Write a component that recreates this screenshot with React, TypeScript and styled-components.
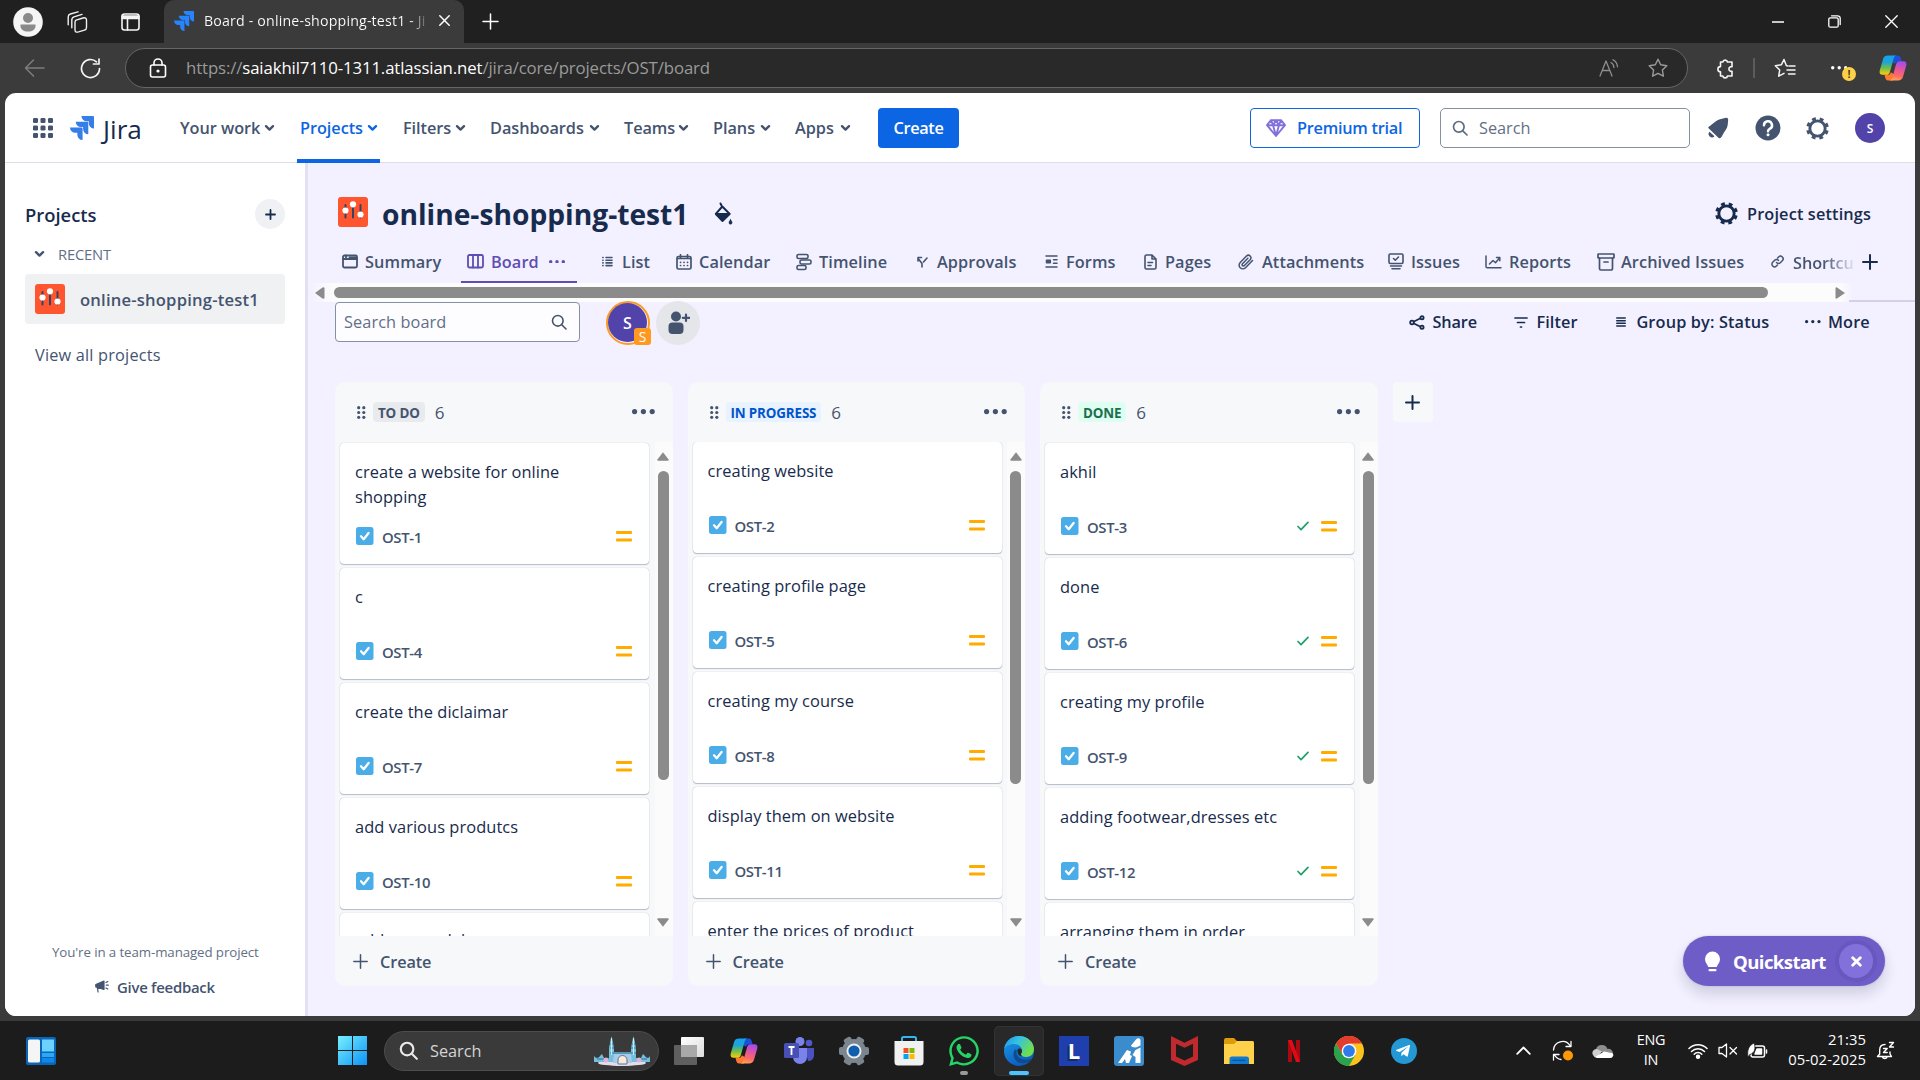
import React from 'react';
import styled, { createGlobalStyle } from 'styled-components';
import { FaWhatsapp, FaTelegramPlane } from 'react-icons/fa';

const Global = createGlobalStyle`
  *{box-sizing:border-box}
  html,body{margin:0;padding:0;background:#3b3b3b;overflow:hidden}
  body{font-family:"Open Sans","Noto Sans","Liberation Sans",sans-serif;color:#172b4d}
  svg{display:block;flex:none}
`;

/* ---------- shared parts ---------- */
const Screen = styled.div`width:1920px;height:1080px;display:flex;flex-direction:column;background:#3b3b3b;overflow:hidden;`;
const Gap = styled.div<{ $w: number }>`width:${p => p.$w}px;flex:none;`;
const Spacer = styled.div`flex:1;`;
const Label = styled.span<{ $w?: number; $s?: number; $wt?: number; $c?: string; $ls?: number }>`
  display:block;flex:none;white-space:nowrap;line-height:1.3;padding-top:2px;
  width:${p => (p.$w ? p.$w + 'px' : 'auto')};
  font-size:${p => p.$s ?? 16.3}px;font-weight:${p => p.$wt ?? 400};
  color:${p => p.$c ?? '#172b4d'};letter-spacing:${p => p.$ls ?? 0}px;
`;

type IconProps = { w: number; h?: number; vb?: string; c?: string; sw?: number; fill?: string; children: React.ReactNode };
const Icon = ({ w, h, vb, c = 'currentColor', sw = 1.5, fill = 'none', children }: IconProps) => (
  <svg width={w} height={h ?? w} viewBox={vb ?? `0 0 ${w} ${h ?? w}`} fill={fill} stroke={c} strokeWidth={sw} strokeLinecap="round" strokeLinejoin="round">{children}</svg>
);

const JiraMark = ({ size, color }: { size: number; color: string }) => (
  <svg width={size} height={size} viewBox="0 0 24 24" fill={color}>
    <path d="M11.571 11.513H0a5.218 5.218 0 0 0 5.232 5.215h2.13v2.057A5.215 5.215 0 0 0 12.575 24V12.518a1.005 1.005 0 0 0-1.005-1.005z" />
    <path d="M17.294 5.757H5.736a5.215 5.215 0 0 0 5.215 5.214h2.129v2.058a5.218 5.218 0 0 0 5.215 5.214V6.758a1.001 1.001 0 0 0-1.001-1.001z" />
    <path d="M23.013 0H11.455a5.215 5.215 0 0 0 5.215 5.215h2.129v2.057A5.215 5.215 0 0 0 24 12.483V1.005A1.001 1.001 0 0 0 23.013 0Z" />
  </svg>
);
const Copilot = ({ size, id }: { size: number; id: string }) => (
  <svg width={size} height={size} viewBox="0 0 28 28">
    <defs>
      <linearGradient id={id + 'a'} x1="0" y1="0" x2="0" y2="1"><stop offset="0" stopColor="#12a4f2" /><stop offset=".35" stopColor="#1fa3d4" /><stop offset=".65" stopColor="#6fbf4b" /><stop offset="1" stopColor="#ffcd0f" /></linearGradient>
      <linearGradient id={id + 'b'} x1=".6" y1="0" x2=".4" y2="1"><stop offset="0" stopColor="#a04bf0" /><stop offset=".4" stopColor="#e0559f" /><stop offset=".75" stopColor="#fc6a63" /><stop offset="1" stopColor="#ffa15a" /></linearGradient>
    </defs>
    <path d="M14 1.500h5c1.600 0 2.300 1.300 2.800 3l.8 2.700h-3.500c-1.700 0-2.500 1-3 2.600L13 8z" fill="#1b50d8" />
    <path d="M14 26.500H9c-1.600 0-2.300-1.300-2.800-3l-.8-2.700h3.500c1.700 0 2.500-1 3-2.600l3 2z" fill="#ff7a2e" />
    <path d="M9 1.500h8.500c-1.700.2-2.500 1.600-3 3.400l-3.500 12.500c-.6 2.200-1.400 3.400-3.500 3.400H3.600C.9 20.800.1 18.800.8 16.200L4 5.200c.8-2.600 2.400-3.700 5-3.700z" fill={`url(#${id}a)`} />
    <path d="M19 26.500h-8.500c1.700-.2 2.500-1.600 3-3.400L17 10.600c.6-2.200 1.400-3.400 3.500-3.400h3.900c2.700 0 3.500 2 2.800 4.600l-3.200 11c-.8 2.600-2.400 3.700-5 3.700z" fill={`url(#${id}b)`} />
  </svg>
);
const ProjectIcon = () => (
  <svg width="30" height="30" viewBox="0 0 30 30">
    <rect width="30" height="30" rx="3" fill="#ff5630" />
    <g stroke="#344563" strokeWidth="2" strokeLinecap="round"><path d="M7.500 8v12.500M15 6v14.500M22.500 8v12.500" /></g>
    <g fill="#fff"><circle cx="7.500" cy="13.500" r="3.100" /><circle cx="15" cy="7.300" r="3.100" /><circle cx="22.500" cy="17.500" r="3.100" /></g>
  </svg>
);
const Chevron = ({ c }: { c: string }) => <Icon w={11} h={8} c={c} sw={2.4}><path d="M2 2.200l3.500 3.400L9 2.200" /></Icon>;
const Magnifier = ({ s, c, sw = 1.7 }: { s: number; c: string; sw?: number }) => <Icon w={s} vb="0 0 16 16" c={c} sw={sw}><circle cx="6.800" cy="6.800" r="5.300" /><path d="M10.800 10.800l4.200 4.200" /></Icon>;
const Gear = ({ s, c }: { s: number; c: string }) => (
  <svg width={s} height={s} viewBox="0 0 24 24" fill="none" stroke={c}>
    <circle cx="12" cy="12" r="8" strokeWidth="3" />
    <circle cx="12" cy="12" r="10.200" strokeWidth="3.200" strokeDasharray="4 4.010" strokeDashoffset="-2" />
  </svg>
);
const Dots = ({ c, r = 2.5, step = 9 }: { c: string; r?: number; step?: number }) => (
  <svg width={step * 2 + r * 2} height={r * 2} fill={c}><circle cx={r} cy={r} r={r} /><circle cx={r + step} cy={r} r={r} /><circle cx={r + step * 2} cy={r} r={r} /></svg>
);

/* ---------- browser chrome ---------- */
const TabStrip = styled.div`height:43px;flex:none;background:#202020;display:flex;align-items:center;padding-left:13px;color:#fff;`;
const Tab = styled.div`
  width:300px;height:43px;background:#3b3b3b;border-radius:10px 10px 0 0;display:flex;align-items:center;padding:0 13px 2px 10px;color:#fff;
`;
const TabTitle = styled.div`
  width:225px;overflow:hidden;margin-left:10px;
  span{background:linear-gradient(90deg,#fff 195px,#fff 205px,#3b3b3b 226px);background-clip:text;-webkit-background-clip:text;color:transparent;}
`;
const WindowButtons = styled.div`margin-left:auto;display:flex;align-items:center;gap:44px;padding-right:22px;`;
const Toolbar = styled.div`height:50px;flex:none;display:flex;align-items:center;padding-left:24px;color:#fff;`;
const AddressBar = styled.div`width:1563px;height:40px;border-radius:20px;border:1px solid #666;background:#292929;display:flex;align-items:center;padding:0 17px 0 23px;`;
const UrlText = styled.div`font-size:16.8px;color:#9a9a9a;white-space:nowrap;margin-left:19px;letter-spacing:-.12px;padding-bottom:1px;b{font-weight:400;color:#fff}`;
const ToolDivider = styled.div`width:2px;height:20px;background:#5c5c5c;`;
const MoreBadge = styled.div`width:26px;height:24px;position:relative;display:flex;align-items:center;`;
const Warn = styled.span`position:absolute;left:11px;top:11px;width:14px;height:14px;border-radius:50%;background:#ffcf45;color:#222;font-size:11px;font-weight:600;line-height:14px;text-align:center;`;

const BrowserTop = () => (
  <>
    <TabStrip>
      <svg width="30" height="30" viewBox="0 0 30 30"><circle cx="15" cy="15" r="14.800" fill="#f5f5f5" /><circle cx="15" cy="11" r="5" fill="#8a8a8a" /><path d="M7.500 17.500h15v1.500c0 3.500-3 5.500-7.500 5.500S7.500 22.500 7.500 19z" fill="#8a8a8a" /></svg>
      <Gap $w={23} />
      <Icon w={22} c="#f0f0f0" sw={1.400}><path d="M10 9.200l7-2.200q3.500-.9 3.500 2v7.500q0 2-2 2.600l-6 1.800q-3.500.9-3.500-2.200v-7.200q0-1.800 1-2.300z" /><path d="M5.800 16.800V9q0-2.500 2.200-3.200l8-2.400M2.200 13.800V6q0-2.300 2.200-3l7.600-2.200" /></Icon>
      <Gap $w={33} />
      <Icon w={19} h={18} c="#f5f5f5" sw={1.600}><rect x="1" y="1" width="17" height="16" rx="2.500" /><path d="M1.500 3.500h16M1.500 5h16" strokeWidth="2.400" /><path d="M6.500 5v12" /></Icon>
      <Gap $w={24} />
      <Tab>
        <JiraMark size={20} color="#2684ff" />
        <TabTitle><Label $s={14.2} $ls={0.17}>Board - online-shopping-test1 - Ji</Label></TabTitle>
        <Gap $w={10} />
        <Icon w={11} c="#fff" sw={1.500}><path d="M.8.8l9.400 9.400M10.200.8L.8 10.200" /></Icon>
      </Tab>
      <Gap $w={18} />
      <Icon w={17} c="#fff" sw={1.500}><path d="M8.500 1v15M1 8.500h15" /></Icon>
      <WindowButtons>
        <Icon w={12} c="#fff" sw={1.300}><path d="M0 6h12" /></Icon>
        <Icon w={13} h={13} c="#fff" sw={1.300}><rect x=".8" y="2.800" width="9.400" height="9.400" rx="1.500" /><path d="M3.500.8h6.200a2.500 2.500 0 0 1 2.500 2.500v6.200" /></Icon>
        <Icon w={13} c="#fff" sw={1.300}><path d="M.8.8l11.400 11.400M12.200.8L.8 12.200" /></Icon>
      </WindowButtons>
    </TabStrip>
    <Toolbar>
      <Icon w={21} h={18} c="#7e7e7e" sw={1.500}><path d="M20 9H1.500M9.500 1L1.500 9l8 8" /></Icon>
      <Gap $w={35} />
      <Icon w={21} c="#f5f5f5" sw={1.700}><path d="M19.500 10.500a9 9 0 1 1-3-6.700M19 1v5h-5.500" /></Icon>
      <Gap $w={24} />
      <AddressBar>
        <Icon w={18} h={20} c="#fff" sw={1.600}><rect x="1.500" y="7" width="15" height="12" rx="2" /><path d="M5 7V5a4 4 0 0 1 8 0v2" /><circle cx="9" cy="13" r=".8" fill="#fff" /></Icon>
        <UrlText>https://<b>saiakhil7110-1311.atlassian.net</b>/jira/core/projects/OST/board</UrlText>
        <Gap $w={889} />
        <Icon w={20} h={18} c="#8e8e8e" sw={1.300}><path d="M1 17L7 2l6 15M3.200 11.500h7.600M12 3.500c2 1 2.800 2.800 2.900 5M14 .8c3 1.500 4.300 4 4.500 7" /></Icon>
        <Gap $w={29} />
        <Icon w={20} c="#9a9a9a" sw={1.400} vb="0 0 20 20"><path d="M10 1.200l2.700 5.600 6.100.9-4.400 4.300 1 6.200L10 15.300l-5.400 2.900 1-6.200L1.200 7.700l6.100-.9z" /></Icon>
      </AddressBar>
      <Gap $w={27} />
      <Icon w={20} h={21} vb="0 0 20 21" c="#f5f5f5" sw={1.600}><path d="M5.500 4h2.300a2.400 2.400 0 0 1 4.700 0H17v4.700a2.400 2.400 0 1 0 0 4.600V18h-4.500a2.400 2.400 0 0 1-4.700 0H5.500v-4.200a2.600 2.600 0 1 1 0-5.200z" /></Icon>
      <Gap $w={18} />
      <ToolDivider />
      <Gap $w={19} />
      <Icon w={22} h={20} vb="0 0 22 20" c="#f5f5f5" sw={1.500}><path d="M13.500 8l-1.200-.5L10 1.500 7.300 6.800l-6 .9 4.400 4.300-1 6.200 5.300-2.800M15 8h6M13 12h8M14.500 16H21" /></Icon>
      <Gap $w={35} />
      <MoreBadge><Dots c="#fff" r={1.700} step={6.500} /><Warn>!</Warn></MoreBadge>
      <Gap $w={22} />
      <Copilot size={28} id="cpTop" />
    </Toolbar>
  </>
);

/* ---------- jira shell ---------- */
const Page = styled.div`
  position:relative;width:1910px;height:923px;flex:none;margin-left:5px;background:#fff;border-radius:11px;overflow:hidden;display:flex;flex-direction:column;
`;
const Header = styled.header`height:70px;flex:none;border-bottom:1px solid #dcdfe8;display:flex;align-items:center;padding:1px 0 0 28px;`;
const NavItem = styled.div<{ $adv: number; $on?: boolean }>`
  width:${p => p.$adv}px;height:68px;flex:none;display:flex;align-items:center;position:relative;
  ${p => p.$on && `&::after{content:"";position:absolute;left:-3px;bottom:-1px;width:83px;height:4px;background:#0c66e4;}`}
`;
const CreateBtn = styled.button`width:81px;height:40px;border:0;border-radius:4px;background:#0c66e4;display:flex;align-items:center;justify-content:center;padding:0;font-family:inherit;`;
const Premium = styled.button`width:170px;height:40px;border:1.500px solid #0c66e4;border-radius:4px;background:#fff;display:flex;align-items:center;padding:0 0 0 15px;gap:11px;font-family:inherit;`;
const SearchBox = styled.div`width:250px;height:40px;border:1px solid #8590a2;border-radius:5px;display:flex;align-items:center;padding-left:11px;gap:11px;`;
const Avatar = styled.div<{ $d: number }>`width:${p => p.$d}px;height:${p => p.$d}px;border-radius:50%;background:#5243aa;color:#fff;font-size:${p => (p.$d > 35 ? 16 : 12)}px;font-weight:600;display:flex;align-items:center;justify-content:center;`;
const Body = styled.div`flex:1;display:flex;min-height:0;`;

const NAV = [
  { t: 'Your work', w: 80, adv: 120 }, { t: 'Projects', w: 63, adv: 103, on: true }, { t: 'Filters', w: 48, adv: 87 },
  { t: 'Dashboards', w: 95, adv: 134 }, { t: 'Teams', w: 50, adv: 89 }, { t: 'Plans', w: 43, adv: 82 }, { t: 'Apps', w: 41, adv: 83 },
];

const JiraHeader = () => (
  <Header>
    <svg width="20" height="20" fill="#44546f">{[0, 7.500, 15].map(y => [0, 7.500, 15].map(x => <rect key={x + '-' + y} x={x} y={y} width="5" height="5" rx="1.200" />))}</svg>
    <Gap $w={17} />
    <JiraMark size={24} color="#357de8" />
    <Gap $w={9} />
    <Label $w={77} $s={26.2} $ls={0}>Jira</Label>
    {NAV.map(n => (
      <NavItem key={n.t} $adv={n.adv} $on={n.on}>
        <Label $w={n.w} $wt={550} $s={16.3} $ls={-0.05} $c={n.on ? '#0c66e4' : '#44546f'}>{n.t}</Label>
        <Gap $w={4} />
        <Chevron c={n.on ? '#0c66e4' : '#44546f'} />
      </NavItem>
    ))}
    <CreateBtn><Label $wt={600} $c="#fff" $ls={-0.3}>Create</Label></CreateBtn>
    <Gap $w={291} />
    <Premium>
      <Icon w={20} h={18} c="#8270db" sw={1.900}><path d="M5 1.200h10l4 5L10 17 1 6.200zM1.500 6.200h17M7 6.200l3 10.500 3-10.500M5 1.200l2 5 3-5 3 5 2-5" /></Icon>
      <Label $wt={600} $c="#0c66e4" $ls={-0.25}>Premium trial</Label>
    </Premium>
    <Gap $w={20} />
    <SearchBox><Magnifier s={16} c="#5d6b83" /><Label $c="#626f86" $s={16.300}>Search</Label></SearchBox>
    <Gap $w={17} />
    <Icon w={22} c="none" fill="#44546f"><path d="M1.300 11C1 9.800 3 9 5 7.300 8 4.500 11 2.500 15 1.700l4-.9q2.200-.2 2.200 1.800L20.700 8c-.5 4-3.200 6-5 9.800-1.200 2.700-2.300 4-4 3.200z" /><path d="M2.500 14.800l5 4.500a3.300 3.300 0 0 1-5-4.500z" /></Icon>
    <Gap $w={26} />
    <svg width="26" height="26" viewBox="0 0 26 26"><circle cx="13" cy="13" r="12.500" fill="#44546f" /><path d="M9 10.300a4 4 0 1 1 6 3.400c-1.400.8-2 1.300-2 2.600" fill="none" stroke="#fff" strokeWidth="2.500" strokeLinecap="round" /><circle cx="13" cy="19.800" r="1.500" fill="#fff" /></svg>
    <Gap $w={25} />
    <Gear s={23} c="#44546f" />
    <Gap $w={26} />
    <Avatar $d={30}>S</Avatar>
  </Header>
);

/* ---------- sidebar ---------- */
const Sidebar = styled.aside`width:303px;flex:none;border-right:3px solid #e3e0f3;background:#fff;display:flex;flex-direction:column;padding:36px 18px 0 20px;`;
const SideTop = styled.div`height:30px;display:flex;align-items:center;justify-content:space-between;width:260px;`;
const RoundBtn = styled.div`width:30px;height:30px;border-radius:50%;background:#f0f1f4;display:flex;align-items:center;justify-content:center;`;
const Recent = styled.div`height:50px;display:flex;align-items:center;padding-left:9px;`;
const Selected = styled.div`width:260px;height:50px;border-radius:4px;background:#f0f1f3;display:flex;align-items:center;padding-left:10px;margin-top:-5px;`;
const ViewAll = styled.div`padding:19px 0 0 10px;`;
const SideFoot = styled.div`margin-top:auto;height:78px;display:flex;flex-direction:column;`;
const FootLine = styled.div<{ $pl: number; $h: number }>`height:${p => p.$h}px;display:flex;align-items:center;padding-left:${p => p.$pl}px;`;

const SidebarPanel = () => (
  <Sidebar>
    <SideTop>
      <Label $s={18.4} $wt={550} $ls={0}>Projects</Label>
      <RoundBtn><Icon w={11} c="#172b4d" sw={1.800}><path d="M5.500 1v9M1 5.500h9" /></Icon></RoundBtn>
    </SideTop>
    <Recent><Chevron c="#44546f" /><Gap $w={13} /><Label $s={14.8} $c="#626f86" $ls={-0.2}>RECENT</Label></Recent>
    <Selected><ProjectIcon /><Gap $w={15} /><Label $wt={550} $c="#44546f" $s={16.6} $ls={0.2}>online-shopping-test1</Label></Selected>
    <ViewAll><Label $c="#44546f" $s={16.3} $ls={0.2}>View all projects</Label></ViewAll>
    <SideFoot>
      <FootLine $pl={27} $h={27}><Label $s={13.3} $c="#626f86" $ls={-0.1}>You're in a team-managed project</Label></FootLine>
      <FootLine $pl={70} $h={43}>
        <Icon w={14} h={13} c="#44546f" sw={1.200}><path d="M.8 4.500L9 1v8.500L.8 7zM2.300 7.500l.8 4.500" fill="#44546f" /><path d="M11 2.500l1.800-1M11.300 5.200h2M11 8l1.800 1" /></Icon>
        <Gap $w={8} /><Label $s={14.9} $wt={550} $c="#44546f" $ls={-0.25}>Give feedback</Label>
      </FootLine>
    </SideFoot>
  </Sidebar>
);

/* ---------- project header ---------- */
const Main = styled.main`width:1607px;flex:none;background:#f3f0ff;display:flex;flex-direction:column;`;
const TitleRow = styled.div`height:77px;flex:none;display:flex;align-items:center;padding:24px 45px 0 30px;& > svg:first-child{margin-top:-3px}`;
const TabsRow = styled.div`height:43px;flex:none;display:flex;align-items:center;padding-left:29px;`;
const ViewTab = styled.div<{ $adv: number; $on?: boolean }>`
  width:${p => p.$adv}px;height:43px;flex:none;display:flex;align-items:center;color:${p => (p.$on ? '#5e4db2' : '#44546f')};position:relative;
  ${p => p.$on && `&::after{content:"";position:absolute;left:-6px;bottom:0;width:116px;height:2px;background:#5e4db2;}`}
`;
const IconSlot = styled.div<{ $w: number }>`width:${p => p.$w}px;flex:none;`;
const FadeLabel = styled.div`
  width:60px;overflow:hidden;white-space:nowrap;font-size:16.3px;font-weight:550;letter-spacing:-.05px;padding-top:2px;
  background:linear-gradient(90deg,#44546f 30px,#f3f0ff 64px);background-clip:text;-webkit-background-clip:text;color:transparent;
`;
const HScroll = styled.div`height:19px;flex:none;display:flex;align-items:center;background:linear-gradient(90deg,#f3f0ff 0,#fcfcfc 26px,#fcfcfc 1532px,#f3f0ff 1546px);padding-left:7px;`;
const HThumb = styled.div`width:1434px;height:11px;border-radius:6px;background:#8b8b8b;margin:0 67px 0 9px;`;
const HLine = styled.div`align-self:flex-end;width:66px;height:2px;background:#d4d0e8;margin:0 0 0 auto;`;

const TABS = [
  { t: 'Summary', iw: 23, adv: 125, i: <Icon w={16} h={15} sw={1.800}><rect x="1" y="1.500" width="14" height="12" rx="1.500" /><path d="M1 5h14M4 1.500v3M7.500 3.300h7" /></Icon> },
  { t: 'Board', iw: 24, adv: 135, on: true, i: <Icon w={17} h={15} sw={1.800}><rect x="1" y="1" width="15" height="12.500" rx="1.500" /><path d="M6 1v12.500M11 1v12.500" /></Icon> },
  { t: 'List', iw: 20, adv: 74, i: <Icon w={11} h={11} sw={1.600}><path d="M4 1.500h6M4 4.200h6M4 6.900h6M4 9.600h6M.8 1.500h.3M.8 4.200h.3M.8 6.900h.3M.8 9.600h.3" /></Icon> },
  { t: 'Calendar', iw: 23, adv: 120, i: <Icon w={16} h={16} sw={1.700}><rect x="1" y="2.500" width="14" height="12.500" rx="1.500" /><path d="M1.500 4.500h13M4.500.8v3M11.500.8v3M4.500 8.300h.1M8 8.300h.1M11.500 8.300h.1M4.500 11.500h.1M8 11.500h.1M11.500 11.500h.1" /></Icon> },
  { t: 'Timeline', iw: 23, adv: 121, i: <Icon w={16} h={18} sw={1.600}><rect x="1" y="1.500" width="11" height="4" rx="1.500" /><rect x="4" y="7" width="11" height="4" rx="1.500" /><rect x="1" y="12.500" width="9" height="4" rx="1.500" /></Icon> },
  { t: 'Approvals', iw: 20, adv: 128, i: <Icon w={11} h={12} sw={1.600}><path d="M5 11V7.500L1.500 3M1 5V1.500h3.500M6.500 6L10 2" /></Icon> },
  { t: 'Forms', iw: 21, adv: 99, i: <Icon w={13} h={13} sw={1.500}><path d="M1 1h11M1 12h11M8.500 4.700H12M8.500 8.300H12" /><path d="M1.500 5.200h3.800v2.600H1.500z" fill="currentColor" /></Icon> },
  { t: 'Pages', iw: 21, adv: 94, i: <Icon w={13} h={16} sw={1.600}><path d="M8 1H2.500A1.500 1.500 0 0 0 1 2.500v11A1.500 1.500 0 0 0 2.500 15h8a1.500 1.500 0 0 0 1.500-1.500V5zM8 1v4h4M4 8.500h4.500M4 11.500h3" /></Icon> },
  { t: 'Attachments', iw: 24, adv: 150, i: <Icon w={16} h={16} sw={1.500}><path d="M14.500 6.500l-7 7.200a3.700 3.700 0 0 1-5.300-5.200l6.500-6.700a2.600 2.600 0 0 1 3.700 3.600l-6 6.200a1.300 1.300 0 0 1-1.900-1.800l5.400-5.600" /></Icon> },
  { t: 'Issues', iw: 23, adv: 97, i: <Icon w={16} h={17} sw={1.600}><rect x="1" y="1" width="14" height="9.500" rx="1.200" /><path d="M5.500 5.500l1.800 1.700L10.500 4M2.500 13h11M4 15.800h8" /></Icon> },
  { t: 'Reports', iw: 24, adv: 112, i: <Icon w={17} h={14} sw={1.500}><path d="M1 1v10.500c0 .8.500 1.300 1.300 1.300H16M4.500 9L8 5.500l2.500 2.200L14.500 3M11.500 2.500h3.300v3.300" /></Icon> },
  { t: 'Archived Issues', iw: 24, adv: 174, i: <Icon w={18} h={18} sw={1.700}><rect x="1" y="1" width="16" height="4" rx=".5" /><path d="M2.500 5v10.500A1.500 1.500 0 0 0 4 17h10a1.500 1.500 0 0 0 1.500-1.500V5M7 9h4" /></Icon> },
] as { t: string; iw: number; adv: number; on?: boolean; i: React.ReactNode }[];

/* ---------- board ---------- */
const Filters = styled.div`height:40px;flex:none;display:flex;align-items:center;padding:0 44px 0 27px;`;
const BoardSearch = styled.div`width:245px;height:40px;border:1px solid #8590a2;border-radius:4px;background:#fdfcff;display:flex;align-items:center;justify-content:space-between;padding:0 12px 0 8px;`;
const AvatarRing = styled.div`position:relative;width:44px;height:44px;margin-top:2px;border-radius:50%;border:2.500px solid #ff991f;display:flex;flex:none;`;
const AvatarBadge = styled.div`position:absolute;right:-3px;bottom:-2px;width:17px;height:17px;border-radius:3px;background:#ff991f;color:#fff;font-size:14px;line-height:18px;text-align:center;`;
const AddPerson = styled.div`width:44px;height:44px;margin-top:1px;border-radius:50%;background:#e5e6ea;display:flex;align-items:center;justify-content:center;flex:none;padding-left:2px;`;
const Columns = styled.div`display:flex;gap:15px;padding:40px 0 0 27px;`;
const Column = styled.section`width:337.500px;height:604px;border-radius:10px;background:#f7f8fa;display:flex;flex-direction:column;flex:none;`;
const ColHead = styled.div`height:60px;flex:none;display:flex;align-items:center;padding:0 18px 0 22px;`;
const Lozenge = styled.div<{ $bg: string; $fg: string }>`height:20px;border-radius:4px;background:${p => p.$bg};color:${p => p.$fg};font-size:13.400px;font-weight:700;line-height:20px;padding:1px 5px 0;letter-spacing:-.15px;white-space:nowrap;display:flex;align-items:center;`;
const ColBody = styled.div`height:494px;flex:none;display:flex;overflow:hidden;`;
const Cards = styled.div<{ $up: number }>`width:319.500px;height:494px;overflow:hidden;display:flex;flex-direction:column;gap:4.100px;padding:1px 0 0 5px;& > *:first-child{margin-top:${p => -p.$up}px}`;
const Card = styled.article<{ $h: number }>`
  width:309px;height:${p => p.$h}px;flex:none;border-radius:4px;background:#fff;box-shadow:0 1px 1px rgba(9,30,66,.25),0 0 1px rgba(9,30,66,.31);
  display:flex;flex-direction:column;justify-content:space-between;padding:16px 17px 18px 15px;
`;
const CardTitle = styled.div<{ $raise?: boolean }>`font-size:16.400px;line-height:${p => (p.$raise ? 21 : 25)}px;letter-spacing:.07px;color:#172b4d;white-space:pre-line;`;
const CardFoot = styled.div`height:19px;display:flex;align-items:center;`;
const VTrack = styled.div`width:18px;background:#fbfbfb;display:flex;flex-direction:column;align-items:center;padding:10px 1px 9px 0;`;
const VThumb = styled.div<{ $h: number }>`width:11px;height:${p => p.$h}px;border-radius:6px;background:#8b8b8b;margin:10px 0 auto;`;
const ColFoot = styled.div`height:50px;display:flex;align-items:center;padding:1px 0 0 18px;`;
const AddColumn = styled.div`width:40px;height:40px;border-radius:4px;background:#f7f8fa;display:flex;align-items:center;justify-content:center;`;

const COLS = [
  { name: 'TO DO', bg: '#e9eaee', fg: '#44546f', up: 0, thumb: 309, done: false, cards: [['create a website for online\nshopping', 'OST-1'], ['c', 'OST-4'], ['create the diclaimar', 'OST-7'], ['add various produtcs', 'OST-10'], ['add my model', 'OST-13']] },
  { name: 'IN PROGRESS', bg: '#e9f2ff', fg: '#0055cc', up: 1, thumb: 313, done: false, cards: [['creating website', 'OST-2'], ['creating profile page', 'OST-5'], ['creating my course', 'OST-8'], ['display them on website', 'OST-11'], ['enter the prices of product', 'OST-14']] },
  { name: 'DONE', bg: '#dcfff1', fg: '#216e4e', up: 0, thumb: 313, done: true, cards: [['akhil', 'OST-3'], ['done', 'OST-6'], ['creating my profile', 'OST-9'], ['adding footwear,dresses etc', 'OST-12'], ['arranging them in order', 'OST-15']] },
];

const BoardColumn = ({ col }: { col: (typeof COLS)[number] }) => (
  <Column>
    <ColHead>
      <svg width="9" height="13" fill="#44546f">{[1.700, 6.500, 11.300].map(y => [1.700, 6.800].map(x => <circle key={x + '-' + y} cx={x} cy={y} r="1.600" />))}</svg>
      <Gap $w={7} />
      <Lozenge $bg={col.bg} $fg={col.fg}>{col.name}</Lozenge>
      <Gap $w={10} />
      <Label $c="#44546f" $s={17}>6</Label>
      <Spacer />
      <Dots c="#44546f" r={2.600} step={8.800} />
    </ColHead>
    <ColBody>
      <Cards $up={col.up}>
        {col.cards.map(([title, key]) => (
          <Card key={key} $h={title.includes('\n') ? 120.900 : 110.900}>
            <CardTitle $raise={key === 'OST-13'}>{title}</CardTitle>
            <CardFoot>
              <svg width="19" height="18" viewBox="0 0 19 18"><rect x="1" width="17.500" height="18" rx="2.500" fill="#4bade8" /><path d="M6 9.300l2.700 2.900L13.600 6" fill="none" stroke="#fff" strokeWidth="2.300" strokeLinecap="round" strokeLinejoin="round" /></svg>
              <Gap $w={8} />
              <Label $s={14.900} $wt={550} $c="#44546f" $ls={-0.350}>{key}</Label>
              <Spacer />
              {col.done && <><Icon w={12} h={10} c="#22a06b" sw={1.700}><path d="M1 5.500l3 3.200L11 1.300" /></Icon><Gap $w={12} /></>}
              <svg width="16" height="11"><rect y="0" width="16" height="3" rx="1" fill="#ffab00" /><rect y="7.500" width="16" height="3" rx="1" fill="#ffab00" /></svg>
            </CardFoot>
          </Card>
        ))}
      </Cards>
      <VTrack>
        <svg width="12" height="9" fill="#8b8b8b"><path d="M6 .3L11.600 7.500Q12 8.800 10.800 8.800H1.200Q0 8.800.4 7.500z" /></svg>
        <VThumb $h={col.thumb} />
        <svg width="12" height="9" fill="#8b8b8b"><path d="M6 8.800L11.600 1.500Q12 .2 10.800.2H1.200Q0 .2.4 1.500z" /></svg>
      </VTrack>
    </ColBody>
    <ColFoot><Icon w={15} c="#44546f" sw={1.500}><path d="M7.500 .8v13.400M.8 7.500h13.400" /></Icon><Gap $w={12} /><Label $wt={550} $c="#44546f" $ls={-0.100}>Create</Label></ColFoot>
  </Column>
);

const Quickstart = styled.div`
  position:absolute;right:30px;bottom:30px;width:202px;height:50px;border-radius:25px;background:#6e5dc6;display:flex;align-items:center;padding-left:21px;
  box-shadow:0 8px 14px rgba(9,30,66,.16),0 0 2px rgba(9,30,66,.2);
`;
const CloseDot = styled.div`width:42px;height:42px;border-radius:50%;border:4px solid #6857bf;background:#8270db;display:flex;align-items:center;justify-content:center;`;

const Workspace = () => (
  <Main>
    <TitleRow>
      <ProjectIcon />
      <Gap $w={14} />
      <Label $w={332} $s={28.200} $wt={700} $ls={0}>online-shopping-test1</Label>
      <Icon w={19} h={24} c="#172b4d" sw={2}><path d="M6.500 1.500l1.800 3.600M8.300 4.500L1.800 11.800l6.700 7 7-7z" /><path d="M2 12h13.500l-7 6.800z" fill="#172b4d" /><path d="M16.500 17.500c1 1.400 1.500 2.300 1.500 3.200a1.500 1.500 0 0 1-3 0c0-.9.5-1.800 1.500-3.200z" fill="#172b4d" strokeWidth=".5" /></Icon>
      <Spacer />
      <Gear s={23} c="#172b4d" />
      <Gap $w={9} />
      <Label $w={123} $wt={550} $ls={0.150}>Project settings</Label>
    </TitleRow>
    <TabsRow>
      <Gap $w={5} />
      {TABS.map(t => (
        <ViewTab key={t.t} $adv={t.adv} $on={t.on}>
          <IconSlot $w={t.iw}>{t.i}</IconSlot>
          <Label $w={t.on ? 58 : undefined} $wt={550} $s={16.300} $ls={0.100} $c="inherit">{t.t}</Label>
          {t.on && <Dots c="#5e4db2" r={1.700} step={6.300} />}
        </ViewTab>
      ))}
      <IconSlot $w={22}><Icon w={13} c="#44546f" sw={1.500}><path d="M5.500 7.500a2.600 2.600 0 0 0 3.800.2l2-2A2.600 2.600 0 0 0 7.600 2l-1 1M7.500 5.500a2.600 2.600 0 0 0-3.800-.2l-2 2A2.600 2.600 0 0 0 5.400 11l1-1" /></Icon></IconSlot>
      <FadeLabel>Shortcu</FadeLabel>
      <Gap $w={9} />
      <Icon w={16} c="#172b4d" sw={2}><path d="M8 1v14M1 8h14" /></Icon>
    </TabsRow>
    <HScroll>
      <svg width="10" height="12" fill="#8b8b8b"><path d="M0 6L7.500.4Q9.500 0 9.500 1.500v9Q9.500 12 7.500 11.600z" /></svg>
      <HThumb />
      <svg width="10" height="12" fill="#8b8b8b"><path d="M10 6L2 .4Q.5 0 .5 1.500v9Q.5 12 2 11.600z" /></svg>
      <HLine />
    </HScroll>
    <Filters>
      <BoardSearch><Label $c="#626f86" $s={16.300} $ls={0.100}>Search board</Label><Magnifier s={16} c="#44546f" sw={1.600} /></BoardSearch>
      <Gap $w={26} />
      <AvatarRing><Avatar $d={39}>S</Avatar><AvatarBadge>S</AvatarBadge></AvatarRing>
      <Gap $w={6} />
      <AddPerson><Icon w={22} h={23} c="none" fill="#44546f"><circle cx="8" cy="5.500" r="5" /><rect x=".5" y="11.500" width="15" height="11.500" rx="4" /><path d="M18 3.500v6.500M14.800 6.800h6.500" stroke="#44546f" strokeWidth="2.200" /></Icon></AddPerson>
      <Spacer />
      <Icon w={16} h={15} c="#172b4d" sw={1.800}><circle cx="13" cy="2.800" r="1.600" /><circle cx="3" cy="7.500" r="1.800" /><circle cx="13" cy="12.200" r="1.600" /><path d="M5 6.500l6-3M5 8.500l6 3" /></Icon>
      <Gap $w={7} /><Label $w={82} $wt={550} $ls={-0.100}>Share</Label>
      <Icon w={14} h={11} c="#172b4d" sw={1.700}><path d="M1 1h12M3.500 5.500h7M6.500 10h1" /></Icon>
      <Gap $w={8} /><Label $w={80} $wt={550} $ls={0.100}>Filter</Label>
      <Icon w={10} h={10} c="#172b4d" sw={1.600}><path d="M.8 1h8.400M.8 3.700h8.400M.8 6.300h8.400M.8 9h8.400" /></Icon>
      <Gap $w={10} /><Label $w={169} $wt={550} $ls={0.150}>Group by: Status</Label>
      <Dots c="#172b4d" r={1.600} step={6.200} />
      <Gap $w={7} /><Label $w={43} $wt={550} $ls={0.100}>More</Label>
    </Filters>
    <Columns>
      {COLS.map(c => <BoardColumn key={c.name} col={c} />)}
      <AddColumn><Icon w={15} c="#172b4d" sw={2}><path d="M7.500 1v13M1 7.500h13" /></Icon></AddColumn>
    </Columns>
  </Main>
);

/* ---------- taskbar ---------- */
const Taskbar = styled.footer`height:59px;margin-top:5px;flex:none;background:#1c1c1c;display:flex;align-items:center;padding-left:26px;color:#fff;`;
const TaskSearch = styled.div`width:275px;height:40px;border-radius:20px;background:#3a3a3a;border:1px solid #4c4c4c;display:flex;align-items:center;padding:0 7px 0 14px;`;
const Slot = styled.div<{ $on?: boolean; $bar?: string; $bw?: number }>`
  width:50px;height:50px;margin-right:5px;flex:none;border-radius:5px;position:relative;display:flex;align-items:center;justify-content:center;
  ${p => p.$on && 'background:#292929;box-shadow:inset 0 0 0 1px #333;'}
  ${p => p.$bar && `&::after{content:"";position:absolute;bottom:1px;left:${25 - (p.$bw ?? 8) / 2}px;width:${p.$bw}px;height:4px;border-radius:2px;background:${p.$bar};}`}
`;
const Clock = styled.div`width:80px;text-align:right;font-size:14.800px;line-height:20px;letter-spacing:.05px;white-space:nowrap;margin-top:-3px;`;
const Lang = styled.div`width:34px;text-align:center;font-size:14.400px;line-height:20px;letter-spacing:-.2px;margin-top:-1px;`;
const Square = styled.div`width:30px;height:30px;background:#1f3fae;color:#fff;font-size:22px;line-height:29px;font-weight:700;text-align:center;text-shadow:-2px 2px 0 #123058;`;

const Castle = () => (
  <svg width="58" height="31" viewBox="0 0 58 31">
    <ellipse cx="29" cy="28" rx="24" ry="3" fill="#e6dbe8" />
    <path d="M1 21c2 3 5 2 6 0l2-2 2 4h5V13l1-5 1.500-7L20 8l1 5v4h17v-4l1-5 1.500-7L42 8l1 5v10h5l2-4 2 2c1 2 4 3 5 0v6H1z" fill="#74bfdc" />
    <path d="M17 13h4M17 9h3.500M38.500 9H42M38 13h5M17 18h26M4 24h12M44 24h10" stroke="#346f96" strokeWidth="1" />
    <path d="M18.500 3v17M40.500 3v17" stroke="#c4edfa" strokeWidth="1.200" />
    <path d="M21 19h17l1 9H20z" fill="#a8cbe8" /><path d="M25 29v-4a4.500 4.500 0 0 1 9 0v4z" fill="#f8e9d8" stroke="#56769d" />
    <circle cx="13" cy="25" r="2.500" fill="#d7b6d8" /><circle cx="46" cy="25" r="2.500" fill="#d7b6d8" />
  </svg>
);
const APPS: { k: string; on?: boolean; bar?: string; bw?: number; i: React.ReactNode }[] = [
  { k: 'view', i: <svg width="30" height="28"><defs><linearGradient id="tv" x1="0" y1="0" x2="1" y2="1"><stop offset="0" stopColor="#fff" /><stop offset="1" stopColor="#dcdcdc" /></linearGradient></defs><rect x="7" y="0" width="23" height="20" rx="1" fill="url(#tv)" /><rect x="0" y="8" width="23" height="20" rx="1" fill="#5f5f5f" /><path d="M7 8h16v12H7z" fill="#a9a9a9" /></svg> },
  { k: 'copilot', i: <Copilot size={28} id="cpTask" /> },
  { k: 'teams', i: <svg width="30" height="28"><circle cx="25" cy="6" r="3.300" fill="#5059c9" /><path d="M21 11h9v8a6 6 0 0 1-6 5z" fill="#4a52c2" /><circle cx="16" cy="4.500" r="4.500" fill="#7b83eb" /><path d="M9 11h14v9a7 7 0 0 1-14 0z" fill="#7b83eb" /><rect y="6" width="15" height="15" rx="1.500" fill="#4950b5" /><path d="M4.500 10h6M7.500 10v8" stroke="#fff" strokeWidth="1.800" /></svg> },
  { k: 'settings', i: <svg width="30" height="30" viewBox="0 0 30 30"><g fill="#7b858e">{[0, 60, 120].map(a => <rect key={a} x="11" y="0" width="8" height="30" rx="2" transform={`rotate(${a + 30} 15 15)`} />)}<circle cx="15" cy="15" r="12" /></g><circle cx="15" cy="15" r="7.500" fill="#e9eef2" /><circle cx="15" cy="15" r="5.600" fill="#0f5fae" /></svg> },
  { k: 'store', i: <svg width="30" height="30"><path d="M8 5V2.500A1.500 1.500 0 0 1 9.500 1h11A1.500 1.500 0 0 1 22 2.500V5" fill="none" stroke="#33b5f0" strokeWidth="2" /><path d="M.5 5h29v21a3.500 3.500 0 0 1-3.500 3.500H4A3.500 3.500 0 0 1 .5 26z" fill="#f1f1f1" /><path d="M9.500 12h5v5h-5z" fill="#f25022" /><path d="M15.500 12h5v5h-5z" fill="#7fba00" /><path d="M9.500 18h5v5h-5z" fill="#00a4ef" /><path d="M15.500 18h5v5h-5z" fill="#ffb900" /></svg> },
  { k: 'wa', bar: '#9a9a9a', bw: 8, i: <FaWhatsapp size={34} color="#25d366" /> },
  { k: 'edge', on: true, bar: '#4cc2ff', bw: 20, i: <svg width="30" height="30" viewBox="0 0 30 30"><defs><linearGradient id="eg" x1="0" y1="0" x2="1" y2=".5"><stop offset="0" stopColor="#1b8fe0" /><stop offset=".45" stopColor="#35c1e6" /><stop offset="1" stopColor="#6fe04a" /></linearGradient><linearGradient id="eb" x1="0" y1="0" x2=".5" y2="1"><stop offset="0" stopColor="#1c9fe8" /><stop offset="1" stopColor="#0b5cc0" /></linearGradient></defs><circle cx="15" cy="15" r="15" fill="url(#eb)" /><path d="M0 13C1.500 5 7.500 0 15 0c8.500 0 15 6 15 13 0 5-3.500 8-8 8-3.500 0-5.200-1.600-5.200-2.800 0-.8 1.300-1.400 1.300-3.700C18.100 11 14.500 8 10 8 5 8 1.500 10.500 0 13z" fill="url(#eg)" /><path d="M11 13.500c-2 3-2.500 8 1.500 11.500 4 3.300 10.500 2.800 14.500-.8.800-.7.300-1.500-.7-1.100-2 .9-6 1.300-9.300-.3-4-2-5.500-5.500-4-8.800z" fill="#104a8c" /><path d="M13.500 14.500c0-2 2-2.500 3.500-1.500 1.500 1.300 1.200 3 .3 4.200-.8 1 0 2.300 1 3-3 .3-5-2.500-4.800-5.700z" fill="#262626" /></svg> },
  { k: 'L', i: <Square>L</Square> },
  { k: 'A', i: <svg width="30" height="30"><rect width="30" height="30" rx="3" fill="#3b8ccc" /><path d="M4 27l9-13 4 1.500-1 3.500 2 1-3 7h-3l-1-4-3 4zM17 9.500L22 3.500c2-2.500 5-1 4.500 1.500v4.500l-4.500 2-4-.5zM21.500 14l5-2.500V27h-5v-6l-3-2z" fill="#fff" /></svg> },
  { k: 'mcafee', i: <svg width="27" height="30"><path d="M0 0L13.500 6.700 27 0V24L13.500 30 0 24z" fill="#c02a2e" /><path d="M5 7.800l8.500 4 8.500-4V20.500l-8.500 4-8.500-4z" fill="#1c1c1c" /></svg> },
  { k: 'files', i: <svg width="30" height="28" viewBox="0 0 30 28"><path d="M0 3a2 2 0 0 1 2-2h8l3 3h15a2 2 0 0 1 2 2v6H0z" fill="#dc9c09" /><path d="M0 7h10l3-3h15a2 2 0 0 1 2 2v21H0z" fill="#ffd04a" /><path d="M5.500 27v-5a2.500 2.500 0 0 1 2.500-2.500h14.500A2.500 2.500 0 0 1 25 22v5z" fill="#1179cf" /><path d="M8.500 23.300h13" stroke="#0b4c8c" /></svg> },
  { k: 'netflix', i: <svg width="14" height="22"><path d="M1 0h4v22H1zM9 0h4v22H9z" fill="#a80a12" /><path d="M1 0h4l8 22H9z" fill="#e50914" /></svg> },
  { k: 'chrome', i: <svg width="30" height="30" viewBox="0 0 30 30"><circle cx="15" cy="15" r="15" fill="#fcc31e" /><path d="M15 7.500H28A15 15 0 0 0 2 7.500L8.500 18.700z" fill="#e33b2e" /><path d="M2 7.500A15 15 0 0 0 15 30l6.500-11.300-13 0z" fill="#2ba24c" /><circle cx="15" cy="15" r="7.300" fill="#fff" /><circle cx="15" cy="15" r="5.900" fill="#2f7bea" /></svg> },
  { k: 'telegram', i: <svg width="26" height="26"><circle cx="13" cy="13" r="13" fill="#2398d4" /><FaTelegramPlane x={4} y={5} size={16} color="#fff" /></svg> },
];

const TaskbarPanel = () => (
  <Taskbar>
    <svg width="30" height="28"><rect width="30" height="28" rx="2" fill="#0a66b8" /><rect x="2" y="2.500" width="12" height="23" rx="1.500" fill="#f5f5f5" /><path d="M16 2.500h12v12H16z" fill="#6bd2ff" /><path d="M16 16h12v4H16z" fill="#2ca8f5" /><path d="M16 21h12v4.500H16z" fill="#1187ea" /></svg>
    <Gap $w={282} />
    <svg width="29" height="29"><defs><linearGradient id="win" gradientUnits="userSpaceOnUse" x1="0" y1="0" x2="29" y2="29"><stop offset="0" stopColor="#77f0ff" /><stop offset="1" stopColor="#0c93f5" /></linearGradient></defs><path d="M0 0h14v14H0zM15 0h14v14H15zM0 15h14v14H0zM15 15h14v14H15z" fill="url(#win)" /></svg>
    <Gap $w={17} />
    <TaskSearch><Magnifier s={19} c="#e8e8e8" sw={1.800} /><Gap $w={12} /><Label $c="#d4d4d4" $s={16.300}>Search</Label><Spacer /><Castle /></TaskSearch>
    <Gap $w={5} />
    {APPS.map(a => <Slot key={a.k} $on={a.on} $bar={a.bar} $bw={a.bw}>{a.i}</Slot>)}
    <Gap $w={82} />
    <Icon w={15} h={9} c="#fff" sw={1.800}><path d="M1.200 7.800l6.300-6.300 6.300 6.300" /></Icon>
    <Gap $w={21} />
    <Icon w={22} h={22} c="#fff" sw={1.300}><path d="M1.500 10A9 9 0 0 1 18 5.500M19 1.500v5h-5M9 19.500a9 9 0 0 1-6.500-4.500M1.500 20v-5.500H7" /><circle cx="16" cy="15.500" r="5" fill="#ff9800" stroke="none" /></Icon>
    <Gap $w={18} />
    <svg width="22" height="14"><path d="M4.500 8a5 5 0 0 1 5-7 6 6 0 0 1 6 4 4.500 4.500 0 0 1 5.500 4l-10-1z" fill="#8d8d8d" /><path d="M1 11a4 4 0 0 1 4-6l5 2.500L5 13.500A4 4 0 0 1 1 11z" fill="#cfcfcf" /><path d="M3 13L12 7.500 20.500 9a3 3 0 0 1-2.500 5H5z" fill="#fff" /></svg>
    <Gap $w={20} />
    <Lang>ENG IN</Lang>
    <Gap $w={20} />
    <Icon w={20} h={16} c="#fff" sw={1.500}><path d="M1 5.500a12.500 12.500 0 0 1 18 0M3.500 8.500a9 9 0 0 1 13 0M6.200 11.200a5.200 5.200 0 0 1 7.600 0" /><circle cx="10" cy="13.700" r="1.500" fill="#fff" /></Icon>
    <Gap $w={10} />
    <Icon w={20} h={15} c="#fff" sw={1.300}><path d="M1 4.500h3L8.500 1v13L4 10.500H1zM12 4.500l6.500 6.500M18.500 4.500L12 11" /></Icon>
    <Gap $w={9} />
    <Icon w={21} h={17} c="#fff" sw={1.500}><rect x="4" y="4" width="13.500" height="11" rx="2" /><path d="M19.500 8v3" /><path d="M10 7h4.500v5H8z" fill="#fff" /><path d="M1 15c-1-6 0-11 6-14 2 5 1 10-4 11.500z" fill="#fff" stroke="#1c1c1c" strokeWidth=".8" /></Icon>
    <Gap $w={18} />
    <Clock>21:35<br />05-02-2025</Clock>
    <Gap $w={10} />
    <Icon w={19} h={19} c="#fff" sw={1.400}><path d="M9 3.500C5.500 3.500 3.700 6 3.700 9v4L1.500 15.500h14L14 13v-2M6.500 16c.5 2 4 2 4.500 0M7.500 7.500h3.700l-3.700 4h3.700M13.500 1.500h4l-4 4.500h4" /></Icon>
  </Taskbar>
);

export default function App() {
  return (
    <Screen>
      <Global />
      <BrowserTop />
      <Page>
        <JiraHeader />
        <Body>
          <SidebarPanel />
          <Workspace />
        </Body>
        <Quickstart>
          <Icon w={17} h={21} c="none" fill="#fff"><path d="M8.500.5a7.500 7.500 0 0 1 7.500 7.500c0 3-1.500 4.500-2.500 6.200-.4.800-.5 1.800-1.500 1.800H5c-1 0-1.100-1-1.500-1.800C2.500 12.500 1 11 1 8A7.500 7.500 0 0 1 8.500.5z" /><rect x="4.500" y="18" width="8" height="2.300" rx="1.100" /></Icon>
          <Gap $w={12} />
          <Label $w={98} $s={18.600} $wt={700} $c="#fff" $ls={-0.600}>Quickstart</Label>
          <Gap $w={4} />
          <CloseDot><Icon w={11} c="#fff" sw={2.800}><path d="M1.700 1.700l7.600 7.600M9.300 1.700L1.700 9.300" /></Icon></CloseDot>
        </Quickstart>
      </Page>
      <TaskbarPanel />
    </Screen>
  );
}
